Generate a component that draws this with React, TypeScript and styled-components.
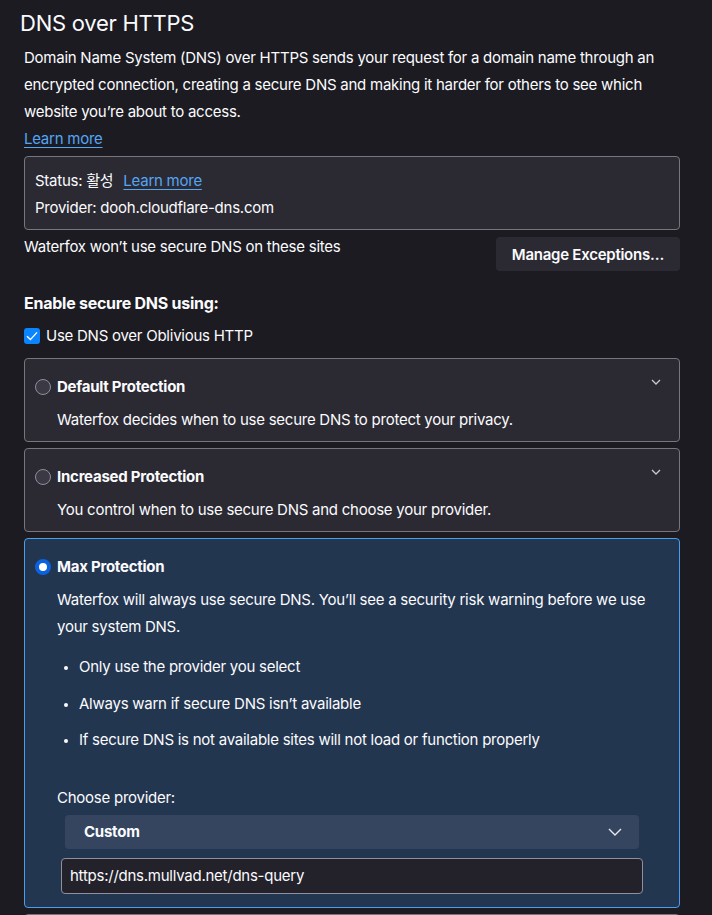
import React from "react";
import styled, { createGlobalStyle } from "styled-components";

const GlobalStyle = createGlobalStyle`
  html, body {
    margin: 0;
    padding: 0;
    background: #1c1b22;
    color: #fbfbfe;
    font-family: Inter, "Noto Sans CJK KR", sans-serif;
  }
`;

const bullets = [
  "Only use the provider you select",
  "Always warn if secure DNS isn’t available",
  "If secure DNS is not available sites will not load or function properly",
];

export default function App() {
  return (
    <Page>
      <GlobalStyle />
      <Title>DNS over HTTPS</Title>
      <Intro>
        Domain Name System (DNS) over HTTPS sends your request for a domain name through an
        encrypted connection, creating a secure DNS and making it harder for others to see which
        website you’re about to access.
      </Intro>
      <Link href="#">Learn more</Link>

      <StatusBox>
        <StatusLine>
          Status: 활성 <Link href="#">Learn more</Link>
        </StatusLine>
        <StatusLine>Provider: dooh.cloudflare-dns.com</StatusLine>
      </StatusBox>

      <ExceptionsRow>
        <span>Waterfox won’t use secure DNS on these sites</span>
        <Button>Manage Exceptions…</Button>
      </ExceptionsRow>

      <Heading>Enable secure DNS using:</Heading>
      <CheckRow>
        <CheckBox>
          <svg width="12" height="10" viewBox="0 0 12 10">
            <path d="M1 5.2 L4.4 8.6 L11 1.4" fill="none" stroke="#fff" strokeWidth="1.4" />
          </svg>
        </CheckBox>
        Use DNS over Oblivious HTTP
      </CheckRow>

      <Cards>
        <Card>
          <CardHead>
            <Radio />
            <CardTitle>Default Protection</CardTitle>
            <Chevron small />
          </CardHead>
          <CardText>Waterfox decides when to use secure DNS to protect your privacy.</CardText>
        </Card>
        <Card>
          <CardHead>
            <Radio />
            <CardTitle>Increased Protection</CardTitle>
            <Chevron small />
          </CardHead>
          <CardText>You control when to use secure DNS and choose your provider.</CardText>
        </Card>
        <Card selected>
          <CardHead>
            <Radio checked />
            <CardTitle>Max Protection</CardTitle>
          </CardHead>
          <CardText>
            Waterfox will always use secure DNS. You’ll see a security risk warning before we use
            your system DNS.
          </CardText>
          <BulletList>
            {bullets.map((b) => (
              <li key={b}>{b}</li>
            ))}
          </BulletList>
          <ProviderLabel>Choose provider:</ProviderLabel>
          <Select>
            <span>Custom</span>
            <Chevron />
          </Select>
          <UrlInput>https://dns.mullvad.net/dns-query</UrlInput>
        </Card>
        <Card />
      </Cards>
    </Page>
  );
}

function Chevron({ small }: { small?: boolean }) {
  return (
    <ChevronBox small={small}>
      {small ? (
        <svg width="10" height="6" viewBox="0 0 10 6">
          <path d="M1 1 L5 5 L9 1" fill="none" stroke="#c8c8cf" strokeWidth="1.3" />
        </svg>
      ) : (
        <svg width="14" height="8" viewBox="0 0 14 8">
          <path d="M1 1 L7 7 L13 1" fill="none" stroke="#e8e8ee" strokeWidth="1.4" />
        </svg>
      )}
    </ChevronBox>
  );
}

const Page = styled.div`
  padding: 10px 32px 0 24px;
  font-size: 15px;
  letter-spacing: -0.25px;
  line-height: 27px;
  height: 915px;
  overflow: hidden;
  box-sizing: border-box;
`;

const Title = styled.h1`
  margin: 0 0 8px -4px;
  font-size: 22px;
  font-weight: 400;
  line-height: 26px;
`;

const Intro = styled.p`
  margin: 0;
`;

const Link = styled.a`
  color: #54a6f5;
  text-decoration: underline;
  text-underline-offset: 3px;
  margin-left: 6px;
  ${Intro} + & {
    margin-left: 0;
  }
`;

const StatusBox = styled.div`
  margin-top: 4px;
  border: 1px solid #77767d;
  border-radius: 4px;
  background: #2b2a33;
  padding: 10px 10px 8px;
`;

const StatusLine = styled.div`
  line-height: 27px;
`;

const ExceptionsRow = styled.div`
  display: flex;
  justify-content: space-between;
  align-items: flex-start;
  margin-top: 7px;
  line-height: 20px;
`;

const Button = styled.button`
  font-family: inherit;
  font-size: 15px;
  letter-spacing: -0.25px;
  font-weight: 600;
  color: #fbfbfe;
  background: #2b2a33;
  border: none;
  border-radius: 4px;
  padding: 0 16px;
  height: 34px;
`;

const Heading = styled.h2`
  margin: 20px 0 11px;
  font-size: 16px;
  font-weight: 700;
  line-height: 24px;
`;

const CheckRow = styled.label`
  display: flex;
  align-items: center;
  gap: 6px;
  line-height: 20px;
`;

const CheckBox = styled.span`
  width: 16px;
  height: 16px;
  border-radius: 3px;
  background: #0a84ff;
  display: flex;
  align-items: center;
  justify-content: center;
`;

const Cards = styled.div`
  margin-top: 12px;
  display: flex;
  flex-direction: column;
  gap: 6px;
`;

const Card = styled.div<{ selected?: boolean }>`
  border: 1px solid ${(p) => (p.selected ? "#4a9ef0" : "#77767d")};
  background: ${(p) => (p.selected ? "#233650" : "#2b2a33")};
  border-radius: 4px;
  padding: 14px 10px 8px;
  min-height: 58px;
  ${(p) => p.selected && "padding-bottom: 13px;"}
`;

const CardHead = styled.div`
  display: flex;
  align-items: center;
  gap: 6px;
  line-height: 27px;
`;

const Radio = styled.span<{ checked?: boolean }>`
  width: 16px;
  height: 16px;
  border-radius: 50%;
  box-sizing: border-box;
  flex: none;
  border: ${(p) => (p.checked ? "4px solid #0a62e0" : "1px solid #8f8f9d")};
  background: ${(p) => (p.checked ? "#fff" : "#3a3944")};
`;

const CardTitle = styled.span`
  font-weight: 700;
  flex: 1;
`;

const ChevronBox = styled.span<{ small?: boolean }>`
  display: flex;
  align-items: center;
  align-self: ${(p) => (p.small ? "flex-start" : "center")};
  margin-top: ${(p) => (p.small ? "6px" : "0")};
  margin-right: ${(p) => (p.small ? "8px" : "0")};
`;

const CardText = styled.p`
  margin: 6px 0 0 22px;
`;

const BulletList = styled.ul`
  margin: 9px 0 0 22px;
  padding: 0 0 0 22px;
  line-height: 36.5px;
  li::marker {
    font-size: 12px;
  }
`;

const ProviderLabel = styled.div`
  margin: 25px 0 0 22px;
  line-height: 27px;
`;

const Select = styled.div`
  margin: 4px 30px 0 30px;
  height: 34px;
  border-radius: 4px;
  background: #354560;
  display: flex;
  align-items: center;
  justify-content: space-between;
  padding: 0 17px 0 19px;
  font-weight: 700;
`;

const UrlInput = styled.div`
  margin: 9px 26px 0 26px;
  height: 36px;
  box-sizing: border-box;
  border: 1px solid #8f8f9d;
  border-radius: 4px;
  background: #23222b;
  display: flex;
  align-items: center;
  padding: 0 8px;
`;
